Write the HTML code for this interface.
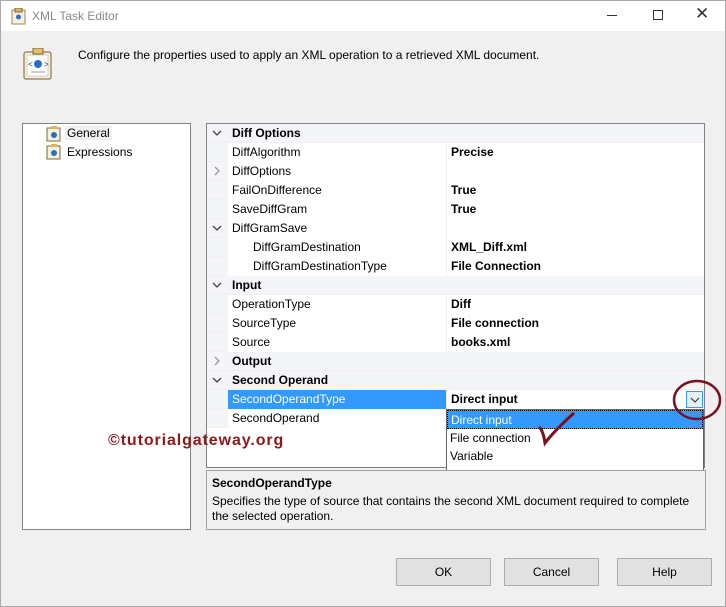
<!DOCTYPE html>
<html><head><meta charset="utf-8"><style>
*{margin:0;padding:0;box-sizing:border-box}
body{width:726px;height:607px;background:#f0f0f0;font-family:"Liberation Sans",sans-serif;font-size:12px;color:#000;position:relative;overflow:hidden}
.abs{position:absolute}
#title{left:0;top:0;width:726px;height:31px;background:#fff;border:1px solid #aaa;border-bottom:none}
.row{position:absolute;left:207px;width:497px;height:19px;border-bottom:1px solid #f0f0f0}
.cat{background:#f3f5f9;font-weight:bold}
.n{position:absolute;left:21px;top:0;height:19px;line-height:19px;background:#fff;width:218px;padding-left:4px}
.cat .n{background:transparent}
.v{position:absolute;left:239px;top:0;height:19px;line-height:19px;width:258px;padding-left:4px;font-weight:bold;border-left:1px solid #f0f0f0;background:#fff}
.ind{padding-left:25px}
.chev{position:absolute;left:5px;top:5px}
.btn{position:absolute;top:558px;width:95px;height:28px;background:#e1e1e1;border:1px solid #adadad;text-align:center;line-height:26px}
</style></head><body>
<div id="title" class="abs">
<svg class="abs" style="left:10px;top:7px" width="16" height="17"><rect x="1" y="2" width="13" height="14" fill="#f8f1dc" stroke="#9a8a5a"/><rect x="4" y="0" width="7" height="4" fill="#d9b860" stroke="#7a6a3a"/><circle cx="7.5" cy="9" r="2.5" fill="#2b6fc2"/></svg>
<div class="abs" style="left:31px;top:8px;color:#888;font-size:12px">XML Task Editor</div>
<div class="abs" style="left:606px;top:14px;width:10px;height:1px;background:#333"></div>
<div class="abs" style="left:652px;top:9px;width:10px;height:10px;border:1px solid #333"></div>
<div class="abs" style="left:694px;top:3px;font-size:17px;color:#333">✕</div>
</div>
<svg class="abs" style="left:23px;top:48px" width="30" height="32"><rect x="1" y="4" width="27" height="27" rx="2" fill="#f6efd9" stroke="#8b7a4c" stroke-width="1.2"/><rect x="4" y="7" width="21" height="21" fill="#fff" stroke="#ccc"/><rect x="10" y="0" width="10" height="6" fill="#e0c070" stroke="#7a6a3a"/><circle cx="15" cy="16" r="4" fill="#2b6fc2"/><text x="5" y="19" font-size="8" fill="#333">&lt;</text><text x="21" y="19" font-size="8" fill="#333">&gt;</text><line x1="8" y1="24" x2="22" y2="24" stroke="#99a"/></svg>
<div class="abs" style="left:78px;top:48px">Configure the properties used to apply an XML operation to a retrieved XML document.</div>
<div class="abs" style="left:22px;top:123px;width:169px;height:407px;background:#fff;border:1px solid #828282"></div>
<svg class="abs" style="left:46px;top:126px" width="16" height="16"><rect x="1" y="2" width="13" height="13" fill="#f6efd9" stroke="#7a6a3a"/><rect x="5" y="0" width="6" height="3" fill="#d9b860"/><circle cx="8" cy="9" r="3" fill="#2b6fc2"/></svg>
<svg class="abs" style="left:46px;top:144px" width="16" height="16"><rect x="1" y="2" width="13" height="13" fill="#f6efd9" stroke="#7a6a3a"/><rect x="5" y="0" width="6" height="3" fill="#d9b860"/><circle cx="8" cy="9" r="3" fill="#2b6fc2"/></svg>
<div class="abs" style="left:65px;top:126px;background:#f0f0f0;padding:0 2px">General</div>
<div class="abs" style="left:67px;top:145px">Expressions</div>
<div class="abs" style="left:206px;top:123px;width:499px;height:345px;background:#fff;border:1px solid #828282"></div>
<div class="abs" style="left:207px;top:124px;width:21px;height:304px;background:#f3f5f9"></div>

<div class="row cat" style="top:124px"><svg class="chev" width="10" height="8"><path d="M1 2 L5 6 L9 2" fill="none" stroke="#444" stroke-width="1.3"/></svg><div class="n" style="width:470px">Diff Options</div></div>
<div class="row" style="top:143px"><div class="n">DiffAlgorithm</div><div class="v">Precise</div></div>
<div class="row" style="top:162px"><svg class="chev" width="10" height="10" style="top:4px"><path d="M3 1 L7 5 L3 9" fill="none" stroke="#999" stroke-width="1.3"/></svg><div class="n">DiffOptions</div><div class="v"></div></div>
<div class="row" style="top:181px"><div class="n">FailOnDifference</div><div class="v">True</div></div>
<div class="row" style="top:200px"><div class="n">SaveDiffGram</div><div class="v">True</div></div>
<div class="row" style="top:219px"><svg class="chev" width="10" height="8"><path d="M1 2 L5 6 L9 2" fill="none" stroke="#444" stroke-width="1.3"/></svg><div class="n">DiffGramSave</div><div class="v"></div></div>
<div class="row" style="top:238px"><div class="n ind">DiffGramDestination</div><div class="v">XML_Diff.xml</div></div>
<div class="row" style="top:257px"><div class="n ind">DiffGramDestinationType</div><div class="v">File Connection</div></div>
<div class="row cat" style="top:276px"><svg class="chev" width="10" height="8"><path d="M1 2 L5 6 L9 2" fill="none" stroke="#444" stroke-width="1.3"/></svg><div class="n" style="width:470px">Input</div></div>
<div class="row" style="top:295px"><div class="n">OperationType</div><div class="v">Diff</div></div>
<div class="row" style="top:314px"><div class="n">SourceType</div><div class="v">File connection</div></div>
<div class="row" style="top:333px"><div class="n">Source</div><div class="v">books.xml</div></div>
<div class="row cat" style="top:352px"><svg class="chev" width="10" height="10" style="top:4px"><path d="M3 1 L7 5 L3 9" fill="none" stroke="#999" stroke-width="1.3"/></svg><div class="n" style="width:470px">Output</div></div>
<div class="row cat" style="top:371px"><svg class="chev" width="10" height="8"><path d="M1 2 L5 6 L9 2" fill="none" stroke="#444" stroke-width="1.3"/></svg><div class="n" style="width:470px">Second Operand</div></div>
<div class="row" style="top:390px"><div class="n" style="background:#3399ff;color:#fff">SecondOperandType</div><div class="v">Direct input</div></div>
<div class="row" style="top:409px"><div class="n">SecondOperand</div><div class="v"></div></div>
<div class="abs" style="left:686px;top:391px;width:17px;height:17px;border:1px solid #3399ff;background:#e5f1fb"><svg class="abs" style="left:3px;top:5px" width="10" height="6"><path d="M1 1 L5 5 L9 1" fill="none" stroke="#333" stroke-width="1.1"/></svg></div>

<div class="abs" style="left:446px;top:409px;width:258px;height:64px;background:#fff;border:1px solid #646464">
<div style="height:19px;line-height:18px;background:#3399ff;color:#fff;padding-left:3px;border:1px dotted #000">Direct input</div>
<div style="height:18px;line-height:18px;padding-left:3px">File connection</div>
<div style="height:18px;line-height:18px;padding-left:3px">Variable</div>
</div>
<div class="abs" style="left:108px;top:432px;color:#8b1a1a;font-weight:bold;font-size:16px;letter-spacing:0.9px">©tutorialgateway.org</div>
<svg class="abs" style="left:530px;top:370px" width="200" height="90"><ellipse cx="167" cy="30" rx="23" ry="19" fill="none" stroke="#7a1020" stroke-width="2.5"/><path d="M9 57 Q13 60 15 73 Q25 60 44 43" fill="none" stroke="#7a1020" stroke-width="3"/></svg>

<div class="abs" style="left:206px;top:470px;width:500px;height:60px;border:1px solid #a0a0a0;background:#f0f0f0;padding:5px 5px">
<div style="font-weight:bold">SecondOperandType</div>
<div style="margin-top:4px;line-height:15px">Specifies the type of source that contains the second XML document required to complete the selected operation.</div>
</div>
<div class="btn" style="left:396px">OK</div>
<div class="btn" style="left:504px">Cancel</div>
<div class="btn" style="left:617px">Help</div>
<div class="abs" style="left:0;top:31px;width:1px;height:576px;background:#aaa"></div>
<div class="abs" style="left:725px;top:31px;width:1px;height:576px;background:#aaa"></div>
<div class="abs" style="left:0;top:606px;width:726px;height:1px;background:#aaa"></div>
</body></html>
